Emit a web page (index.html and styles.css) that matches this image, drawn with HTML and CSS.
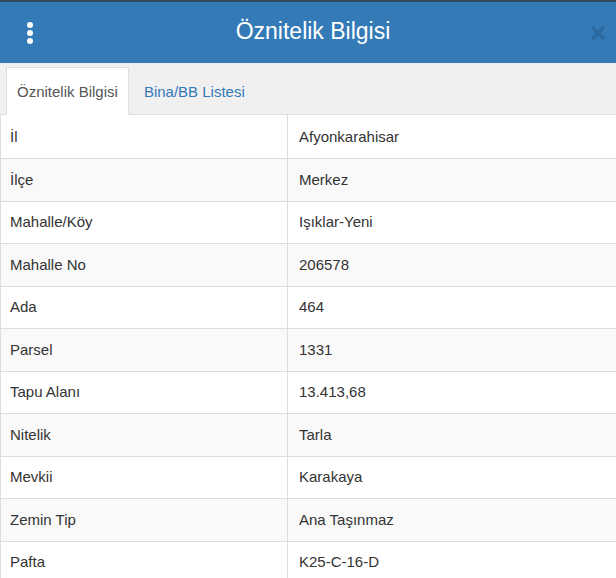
FILE: index.html
```html
<!DOCTYPE html>
<html lang="tr">

<head>
  <meta charset="UTF-8" />
  <meta name="viewport" content="width=device-width, initial-scale=1.0" />
  <title>Öznitelik Bilgisi</title>
  <link rel="stylesheet" href="styles.css">
</head>

<body>
  <div class="panel">
    <div class="strip"></div>
    <!-- başlık -->
    <div class="header">
      <span class="menu"><i></i><i></i><i></i></span>
      <h1>Öznitelik Bilgisi</h1>
      <span class="close">
        <svg width="16" height="16" viewBox="0 0 16 16">
          <path d="M3 3 L13 13 M13 3 L3 13" stroke="#2b6aa0" stroke-width="3.8" stroke-linecap="round" />
        </svg>
      </span>
    </div>
    <!-- sekmeler -->
    <ul class="tabs">
      <li class="active">Öznitelik Bilgisi</li>
      <li>Bina/BB Listesi</li>
    </ul>
    <!-- öznitelik tablosu -->
    <table class="attr">
      <tr><td>İl</td><td>Afyonkarahisar</td></tr>
      <tr><td>İlçe</td><td>Merkez</td></tr>
      <tr><td>Mahalle/Köy</td><td>Işıklar-Yeni</td></tr>
      <tr><td>Mahalle No</td><td>206578</td></tr>
      <tr><td>Ada</td><td>464</td></tr>
      <tr><td>Parsel</td><td>1331</td></tr>
      <tr><td>Tapu Alanı</td><td>13.413,68</td></tr>
      <tr><td>Nitelik</td><td>Tarla</td></tr>
      <tr><td>Mevkii</td><td>Karakaya</td></tr>
      <tr><td>Zemin Tip</td><td>Ana Taşınmaz</td></tr>
      <tr><td>Pafta</td><td>K25-C-16-D</td></tr>
    </table>
  </div>
</body>

</html>
```

FILE: styles.css
```css
* {
  margin: 0;
  padding: 0;
  box-sizing: border-box;
}

body {
  font-family: "Liberation Sans", Arial, sans-serif;
  font-size: 15px;
  color: #333;
  background: #fff;
}

ul {
  list-style: none;
}

.panel {
  width: 616px;
  height: 578px;
  overflow: hidden;
}

.strip {
  height: 2px;
  background: #34495e;
}

.header {
  height: 61px;
  background: #337ab7;
  display: flex;
  align-items: center;
  padding: 0 10px 3px 24px;
}

.header h1 {
  flex: 1;
  text-align: center;
  color: #fff;
  font-size: 23px;
  font-weight: normal;
}

.menu {
  display: flex;
  flex-direction: column;
  gap: 2px;
  width: 12px;
  align-items: center;
  padding-top: 3px;
}

.menu i {
  display: block;
  width: 6px;
  height: 6px;
  border-radius: 50%;
  background: #fff;
}

.close {
  display: flex;
  align-items: center;
  padding-top: 3px;
}

.tabs {
  height: 52px;
  background: #f0f0f0;
  border-bottom: 1px solid #ddd;
  display: flex;
  align-items: flex-end;
  padding-left: 6px;
}

.tabs li {
  height: 48px;
  line-height: 47px;
  padding: 0 10px;
  margin-bottom: -1px;
  margin-right: 4px;
  color: #337ab7;
  border: 1px solid transparent;
}

.tabs li.active {
  color: #555;
  background: #fff;
  border-color: #ddd;
  border-bottom-color: #fff;
}

.attr {
  width: 100%;
  border-collapse: collapse;
  border-left: 1px solid #ddd;
}

.attr td {
  padding: 10.5px 10px 10.5px 9px;
  line-height: 20.5px;
  border-top: 1px solid #ddd;
}

.attr tr:first-child td {
  border-top: none;
  padding-top: 12px;
}

.attr td:first-child {
  width: 287px;
  border-right: 1px solid #ddd;
}

.attr td:last-child {
  padding-left: 11px;
}

.attr tr:nth-child(even) {
  background: #f9f9f9;
}
```
